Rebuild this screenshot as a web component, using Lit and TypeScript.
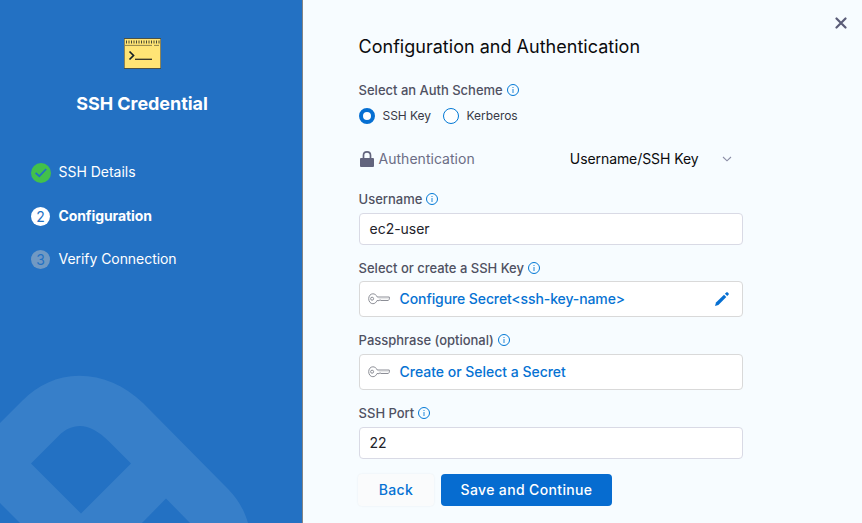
import { LitElement, html, css } from "lit";
import { customElement, property } from "lit/decorators.js";

const keyIcon = html`<svg class="key" width="22" height="12" viewBox="0 0 22 12" fill="none" stroke="#8c8e96" stroke-width="1">
  <path d="M9.2 3.9 C8.2 1.8 6.6 .8 4.9 .8 C2.5 .8 .7 2.9 .7 5.7 C.7 8.6 2.5 10.7 4.9 10.7 C6.7 10.7 8.2 9.6 9 7.5 L11 7.7 L12 6.8 L13 7.5 H20.3 L21.3 6.2 V4 H9.2 Z"/>
  <path d="M10.5 5.7 H20"  stroke-opacity=".25"/>
  <circle cx="4.1" cy="5.7" r="1.5"/>
</svg>`;

@customElement("info-icon")
class InfoIcon extends LitElement {
  static styles = css`
    :host { display: block; width: 12px; height: 12px; flex: none; }
    svg { display: block; }
  `;
  render() {
    return html`<svg width="12" height="12" viewBox="0 0 12 12" fill="none" stroke="#0278d5">
      <circle cx="6" cy="6" r="5.5"/>
      <path d="M6 5.1V9M6 3V4.1" stroke-width="1.1" stroke-opacity=".8"/>
    </svg>`;
  }
}

@customElement("wizard-sidebar")
class WizardSidebar extends LitElement {
  static styles = css`
    :host { display: block; position: relative; box-sizing: border-box; width: 303px; height: 523px; background: #2371c3; border-right: 1px solid #858585; color: #fff; overflow: hidden; }
    .mark { position: absolute; left: 0; bottom: 0; display: block; }
    .content { position: relative; display: flex; flex-direction: column; }
    .logo { display: block; margin: 38px 0 0 123px; }
    h1 { margin: 21px 0 0; padding-right: 18px; font-size: 18px; line-height: 26px; font-weight: 700; text-align: center; letter-spacing: -.06px; }
    ol { list-style: none; margin: 34px 0 0; padding: 0 0 0 31px; }
    li { display: flex; align-items: center; height: 43.5px; gap: 8.5px; font-size: 14px; letter-spacing: -.02px; }
    .name { margin-top: -1.6px; }
    .dot { width: 19px; height: 19px; border-radius: 50%; background: #fff; color: #2371c3; display: grid; place-items: center; font-size: 14px; line-height: 19px; letter-spacing: 0; }
    .done .dot { width: 20px; height: 20px; margin-right: -1px; background: #42c14b; }
    .current { font-weight: 700; letter-spacing: -.1px; }
    .current .dot { font-weight: 400; }
    .todo { letter-spacing: -.05px; }
    .todo .dot { background: #7099c3; }
  `;
  render() {
    return html`
      <svg class="mark" width="302" height="163" viewBox="0 0 302 163">
        <path fill="#377fc9" fill-rule="evenodd" d="M0 63 L22 41 C38 25 57 15.7 79 15.7 C103 15.7 124 25 143 43 L228 129 C237 138 244 149 248 163 H190 L166 138.500 L142 163 H20 L0 143 Z M31 103.500 L81 153.500 L131 103.500 L109 81.500 C99 71.500 89 66 80 66 C72 66 65 69.500 59 75.500 Z"/>
      </svg>
      <div class="content">
        <svg class="logo" width="39" height="32" viewBox="0 0 39 32" fill="none">
          <rect x="1" y=".5" width="37" height="30.500" fill="#ffe475"/>
          <path d="M1.500 0V31M37.500 0V31" stroke="#8d8456"/>
          <path d="M1 .5H38M1 30.500H38" stroke="#4b5146"/>
          <path d="M3 4H37" stroke="#494833" stroke-width="3" stroke-dasharray="1 1.500"/>
          <path d="M2 7.400H29M31 7.400H36" stroke="#92854b"/>
          <path d="M6.500 13.500L10.500 17.500L6.500 21.500" stroke="#172126" stroke-width="1.700"/>
          <path d="M12 21.300H29" stroke="#302f26" stroke-width="1.300"/>
        </svg>
        <h1>SSH Credential</h1>
        <ol>
          <li class="done"><span class="dot"><svg width="14" height="12" viewBox="0 0 14 12" fill="none" stroke="#2371c3" stroke-width="1.800"><path d="M1.600 5.800L5.300 9.200L12.200 2"/></svg></span><span class="name">SSH Details</span></li>
          <li class="current"><span class="dot">2</span><span class="name">Configuration</span></li>
          <li class="todo"><span class="dot">3</span><span class="name">Verify Connection</span></li>
        </ol>
      </div>`;
  }
}

@customElement("form-field")
class FormField extends LitElement {
  @property() label = "";
  @property() value = "";
  @property({ type: Boolean }) secret = false;
  @property({ type: Boolean }) editable = false;
  static styles = css`
    :host { display: block; }
    .label { display: flex; align-items: center; gap: 4px; height: 18px; margin-left: -.4px; font-size: 13px; font-weight: 500; color: #4f5162; letter-spacing: -.01px; }
    .box { box-sizing: border-box; width: 384px; height: 32px; margin-top: 5px; padding: 0 9.6px; border: 1px solid #d9dae5; border-radius: 4px; background: #fff; display: flex; align-items: center; font-size: 14px; color: #22222a; letter-spacing: -.04px; }
    .box span { margin-top: -2px; }
    .secret { height: 36px; padding: 0 13px 0 8px; border-color: #d9d9d9; color: #0672d3; font-weight: 500; letter-spacing: -.02px; }
    .editable { margin-top: 4px; letter-spacing: -.1px; }
    .key { margin: -1px 9.6px 0 0; flex: none; }
    .pencil { margin-left: auto; }
  `;
  render() {
    return html`
      <div class="label"><span>${this.label}</span><info-icon></info-icon></div>
      <div class="box ${this.secret ? "secret" : ""} ${this.editable ? "editable" : ""}">
        ${this.secret ? keyIcon : ""}<span>${this.value}</span>
        ${this.editable ? html`<svg class="pencil" width="14" height="14" viewBox="0 0 14 14" fill="#066fd2"><path d="M0 14L1 10.600L9 2.700L11.300 5L3.400 13Z"/><path d="M9.900 1.800L11.200 .5C11.700 0 12.300 0 12.800 .5L13.500 1.200C14 1.700 14 2.300 13.500 2.800L12.200 4.100Z"/></svg>` : ""}
      </div>`;
  }
}

@customElement("app-root")
class AppRoot extends LitElement {
  static styles = css`
    :host { display: flex; width: 862px; height: 523px; overflow: hidden; background: #f7fcff; font-family: Inter, "Liberation Sans", sans-serif; }
    main { flex: 1; display: grid; grid-template-columns: 384px 1fr; padding-left: 56px; }
    .form { display: flex; flex-direction: column; }
    h2 { margin: 34px 0 0 -.5px; font-size: 18px; line-height: 26px; font-weight: 400; color: #0b0b0d; letter-spacing: .02px; white-space: nowrap; }
    .label { display: flex; align-items: center; gap: 4px; margin: 21px 0 0 -.4px; height: 18px; font-size: 13px; font-weight: 500; color: #4f5162; letter-spacing: -.01px; }
    .radios { display: flex; gap: 12px; height: 16px; margin-top: 9px; }
    .radio { display: flex; align-items: center; gap: 7.6px; font-size: 12px; line-height: 14px; color: #383946; letter-spacing: -.06px; }
    .ring { box-sizing: border-box; width: 16px; height: 16px; border-radius: 50%; border: 1px solid #0278d5; background: #fff; }
    .on { border: 4.500px solid #066fd2; }
    .auth { display: flex; align-items: center; height: 20px; margin-top: 25px; font-size: 14px; line-height: 18px; color: #6b6d85; letter-spacing: .03px; }
    .lock { margin: 0 4.5px 0 1px; }
    .method { margin-left: auto; color: #0b0b0d; letter-spacing: -.08px; }
    .chevron { margin: 0 11px 0 23.5px; }
    .user { margin-top: 21px; }
    .sshkey { margin-top: 14px; }
    .pass { margin-top: 14px; }
    .port { margin-top: 14px; }
    .actions { display: flex; gap: 7px; margin: 15px 0 0 -1px; }
    button { height: 32px; border: 0; border-radius: 4px; padding: 0 0 2px; font: 500 14px Inter, sans-serif; letter-spacing: .36px; }
    .back { width: 76px; color: #0672d3; background: #fafbfc; box-shadow: 0 0 2px #28293d14; }
    .save { width: 171px; background: #066cd0; color: #fff; }
    .close { justify-self: end; margin: 17px 15px 0 0; }
  `;
  render() {
    return html`
      <wizard-sidebar></wizard-sidebar>
      <main>
        <div class="form">
          <h2>Configuration and Authentication</h2>
          <div class="label"><span>Select an Auth Scheme</span><info-icon></info-icon></div>
          <div class="radios">
            <div class="radio"><span class="ring on"></span><span>SSH Key</span></div>
            <div class="radio"><span class="ring"></span><span>Kerberos</span></div>
          </div>
          <div class="auth">
            <svg class="lock" width="14" height="16" viewBox="0 0 14 16"><path d="M3.500 8V4.300C3.500 2 5 .9 7 .9S10.500 2 10.500 4.300V8" fill="none" stroke="#62647d" stroke-width="1.700"/><rect y="7" width="14" height="9" rx="1" fill="#62647d"/></svg>
            <span>Authentication</span>
            <span class="method">Username/SSH Key</span>
            <svg class="chevron" width="10" height="6" viewBox="0 0 10 6" fill="none" stroke="#8b8da5" stroke-width="1.100"><path d="M1 1L5 4.800L9 1"/></svg>
          </div>
          <form-field class="user" label="Username" value="ec2-user"></form-field>
          <form-field class="sshkey" label="Select or create a SSH Key" value="Configure Secret<ssh-key-name>" secret editable></form-field>
          <form-field class="pass" label="Passphrase (optional)" value="Create or Select a Secret" secret></form-field>
          <form-field class="port" label="SSH Port" value="22"></form-field>
          <div class="actions"><button class="back">Back</button><button class="save">Save and Continue</button></div>
        </div>
        <svg class="close" width="12" height="12" viewBox="0 0 12 12" stroke="#5b5d78" stroke-width="2.200" stroke-linecap="round"><path d="M1.500 1.500L10.500 10.500M10.500 1.500L1.500 10.500"/></svg>
      </main>`;
  }
}
